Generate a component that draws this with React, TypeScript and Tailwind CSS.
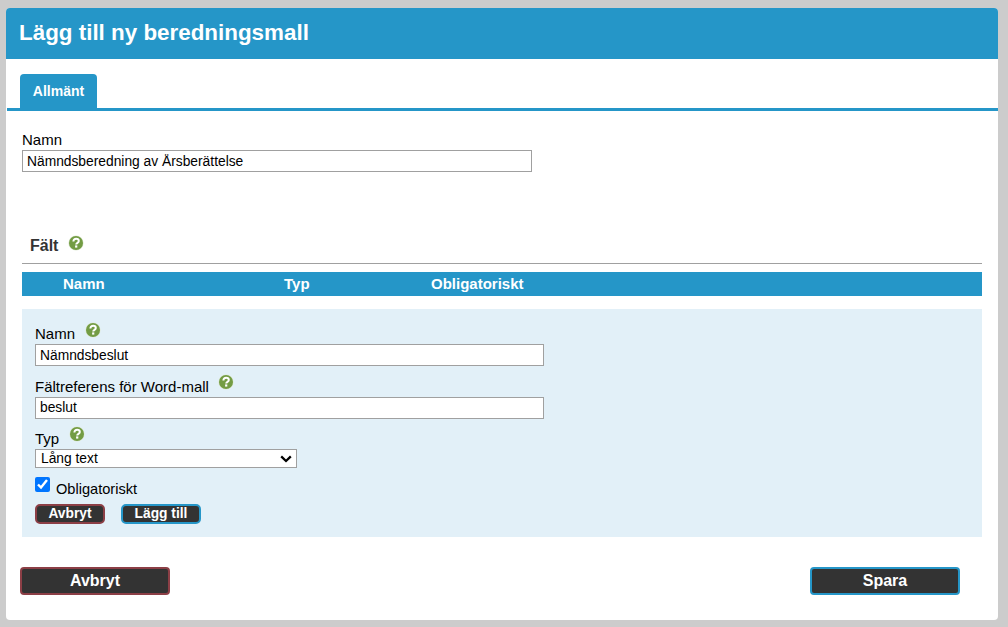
function Help({ className = "" }: { className?: string }) {
  return (
    <svg width="16" height="16" viewBox="0 0 16 16" className={className}>
      <circle cx="8" cy="8" r="7.6" fill="#dfe9d3" />
      <circle cx="8" cy="8" r="7" fill="#739c44" />
      <path d="M5.4 6.4 C5.4 4.8 6.5 3.8 8.1 3.8 C9.7 3.8 10.8 4.8 10.8 6.1 C10.8 7.9 8.2 7.8 8.2 9.5" fill="none" stroke="#fff" strokeWidth="2" />
      <rect x="7.1" y="10.4" width="2.2" height="2.2" fill="#fff" />
    </svg>
  );
}

function Btn({ label, color, size }: { label: string; color: "red" | "blue"; size: "sm" | "lg" }) {
  const c = color === "red" ? "border-[#8c3f46]" : "border-[#2596c8]";
  const s =
    size === "lg"
      ? "w-[150px] h-7 rounded-[4px] text-base"
      : "h-5 rounded-[5px] pb-px text-[13.8px] leading-none";
  return (
    <button className={`${c} ${s} border-2 bg-[#333333] text-white font-bold flex items-center justify-center ${size === "sm" ? (color === "red" ? "w-[70px]" : "w-20") : ""}`}>
      {label}
    </button>
  );
}

function TextInput({ value, className }: { value: string; className: string }) {
  return (
    <input
      readOnly
      value={value}
      className={`${className} block h-[22px] border border-[#a0a0a0] bg-white px-1 text-[13.8px] text-black outline-none`}
    />
  );
}

export default function App() {
  return (
    <div className="h-[627px] bg-[#cccccc] pl-1.5 pr-2.5 pt-2 pb-[7px] font-['Liberation_Sans',Arial,sans-serif] text-black">
      <div className="flex h-full flex-col rounded-[4px] bg-white overflow-hidden">
        <div className="flex h-[51px] shrink-0 items-center bg-[#2596c8] pb-0.5 pl-[13px]">
          <h1 className="text-[22.4px] font-bold text-white">Lägg till ny beredningsmall</h1>
        </div>

        <div className="mt-[15px] ml-px flex h-[37px] shrink-0 border-b-[3px] border-[#2596c8] pl-[13px]">
          <div className="flex h-[34px] w-[77px] items-center justify-center rounded-t-[4px] bg-[#2596c8] text-sm font-bold text-white">
            Allmänt
          </div>
        </div>

        <div className="mx-4 mt-[20px] flex flex-col">
          <label className="h-[19px] text-[15px] leading-[18px]">Namn</label>
          <TextInput value="Nämndsberedning av Årsberättelse" className="w-[510px]" />

          <div className="mt-[62px] flex h-[30px] items-start border-b border-[#a0a0a0] pl-2">
            <span className="text-base leading-[23px] font-bold text-[#333333]">Fält</span>
            <Help className="ml-[10px] mt-px" />
          </div>

          <div className="mt-2 flex h-6 items-center bg-[#2596c8] text-[15px] font-bold text-white">
            <span className="ml-[41px] w-[221px]">Namn</span>
            <span className="w-[147px]">Typ</span>
            <span>Obligatoriskt</span>
          </div>

          <div className="mt-[13px] h-[228px] bg-[#e2f0f8] pl-[13px] pt-[12px]">
            <div className="flex h-[23px] items-start text-[15px] leading-[26px]">
              <span>Namn</span>
              <Help className="ml-[10px] mt-px" />
            </div>
            <TextInput value="Nämndsbeslut" className="w-[509px]" />
            <div className="mt-[9px] flex h-[22px] items-start text-[15px] leading-[24px]">
              <span>Fältreferens för Word-mall</span>
              <Help className="ml-[9px] -mt-px" />
            </div>
            <TextInput value="beslut" className="w-[509px] pb-px" />
            <div className="mt-[9px] flex h-[21px] items-start text-[15px] leading-[22px]">
              <span>Typ</span>
              <Help className="ml-[10px] -mt-0.5" />
            </div>
            <div className="relative h-[19px] w-[262px]">
              <select className="block h-[19px] w-full appearance-none border border-[#a0a0a0] bg-white py-0 pl-[5px] text-[13.8px] leading-[16px] text-black outline-none">
                <option>Lång text</option>
              </select>
              <svg width="12" height="8" viewBox="0 0 12 8" className="pointer-events-none absolute top-[6px] right-[5px]">
                <path d="M1.2 1.4 L6 6 L10.8 1.4" fill="none" stroke="#000" strokeWidth="2.3" />
              </svg>
            </div>
            <div className="mt-[9px] flex h-[22px] items-start">
              <input type="checkbox" checked readOnly className="m-0 h-[15px] w-[15px] accent-[#0075ff]" />
              <span className="ml-[6px] mt-[3px] text-[14.6px] leading-[18px]">Obligatoriskt</span>
            </div>
            <div className="mt-[5px] flex gap-4">
              <Btn label="Avbryt" color="red" size="sm" />
              <Btn label="Lägg till" color="blue" size="sm" />
            </div>
          </div>
        </div>

        <div className="mt-[30px] flex justify-between pl-[14px] pr-[38px]">
          <Btn label="Avbryt" color="red" size="lg" />
          <Btn label="Spara" color="blue" size="lg" />
        </div>
      </div>
    </div>
  );
}
